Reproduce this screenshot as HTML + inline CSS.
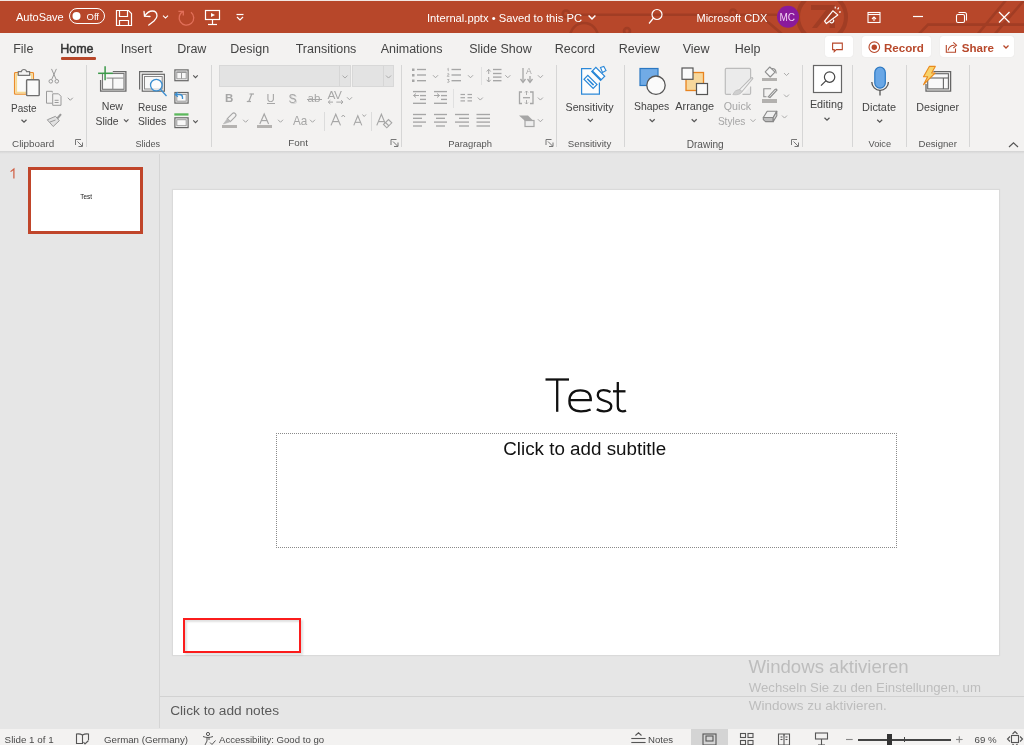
<!DOCTYPE html>
<html><head><meta charset="utf-8">
<style>
*{margin:0;padding:0;box-sizing:border-box}
html,body{width:1024px;height:745px;overflow:hidden;background:#e6e6e6;font-family:"Liberation Sans",sans-serif;position:relative}
.a{position:absolute;white-space:nowrap;line-height:1}
svg{position:absolute;left:0;top:0}
</style></head><body>
<div class="a" style="left:0px;top:0px;width:1024px;height:1px;background:#f2e6e2;"></div>
<div class="a" style="left:0px;top:1px;width:1024px;height:32px;background:#b7472a;"></div>
<div class="a" style="left:0px;top:33px;width:1024px;height:118px;background:#f3f2f1;"></div>
<div class="a" style="left:61px;top:57px;width:35px;height:3px;background:#b7472a;border-radius:1px"></div>
<div class="a" style="left:825px;top:36px;width:28px;height:21px;background:#fff;border-radius:3px;box-shadow:0 0 1px rgba(0,0,0,.12)"></div>
<div class="a" style="left:862px;top:36px;width:69px;height:21px;background:#fff;border-radius:3px;box-shadow:0 0 1px rgba(0,0,0,.12)"></div>
<div class="a" style="left:940px;top:36px;width:74px;height:21px;background:#fff;border-radius:3px;box-shadow:0 0 1px rgba(0,0,0,.12)"></div>
<div class="a" style="left:86px;top:65px;width:1px;height:82px;background:#d6d6d6;"></div>
<div class="a" style="left:211px;top:65px;width:1px;height:82px;background:#d6d6d6;"></div>
<div class="a" style="left:401px;top:65px;width:1px;height:82px;background:#d6d6d6;"></div>
<div class="a" style="left:556px;top:65px;width:1px;height:82px;background:#d6d6d6;"></div>
<div class="a" style="left:624px;top:65px;width:1px;height:82px;background:#d6d6d6;"></div>
<div class="a" style="left:802px;top:65px;width:1px;height:82px;background:#d6d6d6;"></div>
<div class="a" style="left:852px;top:65px;width:1px;height:82px;background:#d6d6d6;"></div>
<div class="a" style="left:906px;top:65px;width:1px;height:82px;background:#d6d6d6;"></div>
<div class="a" style="left:969px;top:65px;width:1px;height:82px;background:#d6d6d6;"></div>
<div class="a" style="left:219px;top:65px;width:132px;height:22px;background:#e3e3e3;border:1px solid #d8d8d8"></div>
<div class="a" style="left:352px;top:65px;width:42px;height:22px;background:#e3e3e3;border:1px solid #d8d8d8"></div>
<div class="a" style="left:338.5px;top:66px;width:1px;height:20px;background:#d6d6d6;"></div>
<div class="a" style="left:382.5px;top:66px;width:1px;height:20px;background:#d6d6d6;"></div>
<div class="a" style="left:267px;top:103px;width:8px;height:1px;background:#a6a6a6;"></div>
<div class="a" style="left:306.5px;top:99.3px;width:15px;height:1px;background:#a6a6a6;"></div>
<div class="a" style="left:222px;top:124.6px;width:14.6px;height:3.4px;background:#b5b3b1;"></div>
<div class="a" style="left:257px;top:125px;width:15px;height:3px;background:#b5b3b1;"></div>
<div class="a" style="left:324px;top:111.5px;width:1px;height:19.5px;background:#dcdcdc;"></div>
<div class="a" style="left:371px;top:111.5px;width:1px;height:19.5px;background:#dcdcdc;"></div>
<div class="a" style="left:481px;top:67px;width:1px;height:18px;background:#e0e0e0;"></div>
<div class="a" style="left:453px;top:89px;width:1px;height:19px;background:#e0e0e0;"></div>
<div class="a" style="left:762.2px;top:78px;width:15px;height:3.2px;background:#b3b1af;"></div>
<div class="a" style="left:762.2px;top:99px;width:15px;height:3.5px;background:#b3b1af;"></div>
<div class="a" style="left:0px;top:151px;width:1024px;height:3px;background:linear-gradient(#d3d3d3,#e6e6e6);"></div>
<div class="a" style="left:159px;top:154px;width:1px;height:574px;background:#d5d5d5;"></div>
<div class="a" style="left:28px;top:167px;width:115px;height:67px;background:#fff;border:3px solid #c0452a"></div>
<div class="a" style="left:173px;top:190px;width:826px;height:465px;background:#fff;box-shadow:0 0 1px 1px rgba(0,0,0,.05)"></div>
<div class="a" style="left:276px;top:433px;width:621px;height:115px;background:transparent;border:1px dotted #8a8a8a"></div>
<div class="a" style="left:183px;top:618px;width:118px;height:35px;background:transparent;border:2px solid #fb1c1c;box-shadow:inset 2px 2px 2px rgba(0,0,0,.12), 2px 2px 2px rgba(0,0,0,.12)"></div>
<div class="a" style="left:160px;top:696px;width:864px;height:1px;background:#d2d2d2;"></div>
<div class="a" style="left:0px;top:729px;width:1024px;height:16px;background:#f3f2f1;"></div>
<div class="a" style="left:691px;top:729px;width:37px;height:16px;background:#d4d4d4;"></div>
<div class="a" style="left:858px;top:739px;width:93px;height:1.5px;background:#444;"></div>
<div class="a" style="left:887px;top:733.5px;width:4.5px;height:11px;background:#333;"></div>
<div class="a" style="left:904px;top:736.7px;width:1.2px;height:5.5px;background:#444;"></div>
<svg width="1024" height="745" viewBox="0 0 1024 745">
<defs><clipPath id="tb"><rect x="0" y="1" width="1024" height="32"/></clipPath></defs>
<g clip-path="url(#tb)" fill="none" stroke="#a13d24" stroke-width="2.6"><line x1="569.5" y1="14.8" x2="777" y2="14.8"/><circle cx="566" cy="13.8" r="3.3"/><circle cx="733" cy="12.5" r="3"/><circle cx="584" cy="37" r="14"/><circle cx="627" cy="31" r="3"/><line x1="762" y1="17" x2="782" y2="34"/><circle cx="822" cy="17" r="24" stroke-width="4"/><polyline points="918,35 928,24.6 1026,24.6"/><line x1="977" y1="35" x2="1006" y2="0"/><line x1="994" y1="35" x2="1026" y2="-2"/></g>
<path d="M811 5 H835 V28 H829.5 V13 L817 28 H812 L826 10 H811 Z" fill="#a13d24"/>
<rect x="69.5" y="8.5" width="35" height="15" rx="7.5" fill="none" stroke="#fff" stroke-width="1"/>
<circle cx="76.5" cy="16" r="4" fill="#fff"/>
<g fill="none" stroke="#fff" stroke-width="1.2"><path d="M116.5 10.5 H128.5 L131.5 13.5 V25.5 H116.5 Z"/><path d="M119.5 10.5 V16.5 H127.5 V10.5"/><path d="M119.5 25.5 V20.5 H128.5 V25.5"/></g>
<g fill="none" stroke="#fff" stroke-width="1.3" stroke-linecap="round"><path d="M144.7 16 C147 12.5 150 11 152.3 11 C155 11 157 13 157 16 C157 18 155.5 19.5 154 21 L148.8 25"/><polyline points="144,11.3 144.5,16.2 150,16.5"/></g>
<polyline points="163.0,15.55 165.5,18.05 168.0,15.55" fill="none" stroke="#fff" stroke-width="1.1"/>
<g fill="none" stroke="#e2705a" stroke-width="1.3"><path d="M183.3 11.3 A7.3 7.3 0 1 0 191 12.2"/><polyline points="178.4,11.3 183.3,11.3 183.3,15.4"/></g>
<g fill="none" stroke="#fff" stroke-width="1.2"><rect x="205.5" y="10.5" width="14" height="9"/><line x1="212.5" y1="19.5" x2="212.5" y2="24.5"/><line x1="208" y1="24.5" x2="217" y2="24.5"/></g>
<path d="M211 13 L215 15 L211 17 Z" fill="#fff"/>
<g fill="none" stroke="#fff" stroke-width="1.2"><line x1="236.5" y1="14.5" x2="243.5" y2="14.5"/><polyline points="237,17 240,20 243,17"/></g>
<polyline points="588.6,15.6 592,19 595.4,15.6" fill="none" stroke="#fff" stroke-width="1.4"/>
<g fill="none" stroke="#fff" stroke-width="1.2"><circle cx="657" cy="14.5" r="5"/><line x1="653.5" y1="18" x2="649" y2="23.5"/></g>
<circle cx="788" cy="16.7" r="11" fill="#8a1a9b"/>
<g fill="none" stroke="#fff" stroke-width="1.2" stroke-linejoin="round"><path d="M824.6 21.2 L832.8 10.8 L837.8 14.9 L826.4 23.6 Z"/><path d="M829.8 21.8 A1.9 1.9 0 0 0 833.3 19.6"/><line x1="837.6" y1="9.3" x2="838.8" y2="7.5"/><line x1="839" y1="12.2" x2="840.8" y2="11.8"/><line x1="835.2" y1="8.5" x2="835.3" y2="6.6"/></g>
<g fill="none" stroke="#fff" stroke-width="1.1"><rect x="868" y="12.5" width="12" height="10"/><line x1="868" y1="14.5" x2="880" y2="14.5"/><polyline points="872,19 874,17 876,19"/><line x1="874" y1="17" x2="874" y2="21"/></g>
<line x1="913" y1="16.5" x2="923" y2="16.5" stroke="#fff" stroke-width="1.2"/>
<g fill="none" stroke="#fff" stroke-width="1.1"><rect x="956.5" y="14.5" width="8" height="8" rx="1.5"/><path d="M958.5 12.5 H964.5 A2 2 0 0 1 966.5 14.5 V20.5"/></g>
<g stroke="#fff" stroke-width="1.2"><line x1="999" y1="12" x2="1009.5" y2="22.5"/><line x1="1009.5" y1="12" x2="999" y2="22.5"/></g>
<g fill="none" stroke="#b7472a" stroke-width="1.1"><path d="M832.6 43.1 H842.3 V49.6 H836.3 L834.2 51.6 V49.6 H832.6 Z"/><circle cx="874.3" cy="47.2" r="5.3"/><path d="M946.3 45 V52.2 H955.5 V48.5"/><path d="M948.2 50.3 Q949 45.2 954.5 45.2"/><polyline points="953.3,42.3 956.5,45.2 953.3,48.1"/></g>
<circle cx="874.3" cy="47.2" r="2.7" fill="#b7472a"/>
<polyline points="1003.5,45.5 1006,48 1008.5,45.5" fill="none" stroke="#b7472a" stroke-width="1.3"/>
<g fill="none" stroke="#777" stroke-width="1"><polyline points="75.5,145 75.5,139.5 81,139.5"/><line x1="77.5" y1="141.5" x2="82" y2="146"/><polyline points="82.5,142.5 82.5,146.5 78.5,146.5"/></g>
<g fill="none" stroke="#777" stroke-width="1"><polyline points="391.0,145 391.0,139.5 396.5,139.5"/><line x1="393.0" y1="141.5" x2="397.5" y2="146"/><polyline points="398.0,142.5 398.0,146.5 394.0,146.5"/></g>
<g fill="none" stroke="#777" stroke-width="1"><polyline points="546.0,145 546.0,139.5 551.5,139.5"/><line x1="548.0" y1="141.5" x2="552.5" y2="146"/><polyline points="553.0,142.5 553.0,146.5 549.0,146.5"/></g>
<g fill="none" stroke="#777" stroke-width="1"><polyline points="791.5,145 791.5,139.5 797,139.5"/><line x1="793.5" y1="141.5" x2="798" y2="146"/><polyline points="798.5,142.5 798.5,146.5 794.5,146.5"/></g>
<polyline points="1009,147 1013.5,142.8 1018,147" fill="none" stroke="#555" stroke-width="1.2"/>
<g><rect x="14.6" y="72.6" width="18.8" height="21.6" rx="0.8" fill="#fafafa" stroke="#eb8c2a" stroke-width="1.3"/><rect x="16.3" y="74.3" width="15.4" height="18.2" fill="none" stroke="#f7d98f" stroke-width="1.6"/><path d="M18.3 75.3 V71.7 H21.3 A2.7 2.7 0 0 1 26.6 71.7 H29.6 V75.3 Z" fill="#f4f4f4" stroke="#777" stroke-width="1.2"/><rect x="26.6" y="79.7" width="12.6" height="15.9" rx="0.8" fill="#fafafa" stroke="#6f6f6f" stroke-width="1.4"/></g>
<polyline points="21.5,119.75 24,122.25 26.5,119.75" fill="none" stroke="#555" stroke-width="1.2"/>
<g fill="none" stroke="#9a9a9a" stroke-width="1"><line x1="51.5" y1="68.9" x2="56.2" y2="79.5"/><line x1="56.4" y1="68.9" x2="51.7" y2="79.5"/><circle cx="50.8" cy="81.3" r="1.8"/><circle cx="56.8" cy="81.3" r="1.8"/><path d="M52.3 92.5 V91.3 H46.5 V103.2 H52.3"/><path d="M52.7 93.8 H58.5 L61 96.3 V105.3 H52.7 Z"/><line x1="54.6" y1="100.3" x2="58.6" y2="100.3"/><line x1="54.6" y1="102.5" x2="58.6" y2="102.5"/><path d="M47.3 119.8 L55.5 116.3 L59.3 120.7 L53.2 126.5 Z" fill="#e2e2e2"/><line x1="50" y1="122" x2="55.5" y2="120"/></g>
<line x1="57.3" y1="118.5" x2="61" y2="114.2" stroke="#9a9a9a" stroke-width="2"/>
<polyline points="67.8,97.75 70.3,100.25 72.8,97.75" fill="none" stroke="#999" stroke-width="1"/>
<g fill="none" stroke="#6a6a6a" stroke-width="1.3"><polyline points="112.8,71.6 125.9,71.6 125.9,91.2 100.6,91.2 100.6,80"/></g>
<rect x="102.5" y="73.5" width="21.5" height="15.8" fill="#f8f8f8" stroke="#777" stroke-width="1.1"/>
<g stroke="#8a8a8a" stroke-width="1.1"><line x1="106.5" y1="78.1" x2="123.5" y2="78.1"/><line x1="112.8" y1="78.1" x2="112.8" y2="89"/></g>
<g stroke="#3c9a4a" stroke-width="1.5"><line x1="98.1" y1="73.3" x2="112.8" y2="73.3"/><line x1="105.1" y1="66.3" x2="105.1" y2="80.3"/></g>
<polyline points="123.95,119.375 126.2,121.625 128.45,119.375" fill="none" stroke="#555" stroke-width="1.1"/>
<polyline points="139.6,89.4 139.6,71.6 162.7,71.6" fill="none" stroke="#6a6a6a" stroke-width="1.2"/>
<rect x="142.3" y="74.3" width="22.1" height="16.9" fill="#f8f8f8" stroke="#6a6a6a" stroke-width="1.2"/>
<rect x="144.5" y="76.5" width="17.7" height="12.5" fill="none" stroke="#888" stroke-width="1"/>
<circle cx="156.3" cy="85.1" r="5.8" fill="rgba(255,255,255,.6)" stroke="#3a8ed0" stroke-width="1.3"/>
<line x1="160.4" y1="89.3" x2="166.5" y2="96" stroke="#3a8ed0" stroke-width="1.3"/>
<rect x="174.9" y="69.89999999999999" width="13.200000000000001" height="10.8" fill="#f8f8f8" stroke="#666" stroke-width="1.2"/>
<rect x="176.8" y="71.8" width="9.4" height="7" fill="none" stroke="#999" stroke-width="1"/>
<g stroke="#999" stroke-width="1"><line x1="176.5" y1="72.5" x2="186.5" y2="72.5"/><line x1="181.5" y1="72.5" x2="181.5" y2="78.8"/></g>
<rect x="174.9" y="92.5" width="13.200000000000001" height="10.600000000000001" fill="#f8f8f8" stroke="#666" stroke-width="1.2"/>
<rect x="176.8" y="94.4" width="9.4" height="6.800000000000001" fill="none" stroke="#999" stroke-width="1"/>
<g fill="none" stroke="#3a8ed0" stroke-width="1.3"><path d="M175.5 94.5 H179.5 A3 3 0 0 1 182.5 97.5 V99"/><polyline points="177.8,92.2 175.3,94.5 177.8,96.8"/></g>
<rect x="174.9" y="117.8" width="13.200000000000001" height="9.8" fill="#f8f8f8" stroke="#666" stroke-width="1.2"/>
<rect x="176.8" y="119.7" width="9.4" height="6" fill="none" stroke="#999" stroke-width="1"/>
<rect x="174.3" y="113.3" width="14.2" height="2.3" fill="#5cb85c"/>
<polyline points="193.25,75.375 195.5,77.625 197.75,75.375" fill="none" stroke="#555" stroke-width="1.1"/>
<polyline points="193.25,120.375 195.5,122.625 197.75,120.375" fill="none" stroke="#555" stroke-width="1.1"/>
<polyline points="342.5,75.55 345,78.05 347.5,75.55" fill="none" stroke="#aaa" stroke-width="1"/>
<polyline points="386.0,75.55 388.5,78.05 391.0,75.55" fill="none" stroke="#aaa" stroke-width="1"/>
<g stroke="#a6a6a6" stroke-width="1.2"><line x1="251.8" y1="94" x2="248.8" y2="101.5"/><line x1="249.5" y1="94" x2="254" y2="94"/><line x1="246.8" y1="101.5" x2="251" y2="101.5"/></g>
<g fill="none" stroke="#a6a6a6" stroke-width="1"><line x1="328.3" y1="102.1" x2="333" y2="102.1"/><polyline points="330.3,100.2 328.3,102.1 330.3,104"/><line x1="336.3" y1="102.1" x2="343" y2="102.1"/><polyline points="341,100.2 343,102.1 341,104"/></g>
<polyline points="347.0,97.25 349.5,99.75 352.0,97.25" fill="none" stroke="#a6a6a6" stroke-width="1"/>
<path d="M232.3 113.7 A2.12 2.12 0 0 1 235.3 116.7 L230.3 121.7 L227.3 118.7 Z" fill="none" stroke="#a6a6a6" stroke-width="1.1" stroke-linejoin="round"/>
<path d="M227.3 118.7 L230.3 121.7 L223.4 124 Z" fill="#b9b9b9" stroke="#b9b9b9" stroke-width="0.6" stroke-linejoin="round"/>
<polyline points="243.1,119.75 245.6,122.25 248.1,119.75" fill="none" stroke="#a6a6a6" stroke-width="1"/>
<g fill="none" stroke="#a6a6a6" stroke-width="1.15"><polyline points="259.8,124 264.2,114 268.6,124" stroke-linejoin="miter"/><line x1="261.21" y1="120.58" x2="267.19" y2="120.58"/></g>
<polyline points="278.0,119.75 280.5,122.25 283.0,119.75" fill="none" stroke="#a6a6a6" stroke-width="1"/>
<polyline points="310.0,119.75 312.5,122.25 315.0,119.75" fill="none" stroke="#a6a6a6" stroke-width="1"/>
<g fill="none" stroke="#a6a6a6" stroke-width="1.15"><polyline points="331,125.4 335.75,114.2 340.5,125.4"/><line x1="332.52" y1="121.59" x2="338.98" y2="121.59"/></g>
<polyline points="341.5,117 343.2,115 345,117" fill="none" stroke="#a6a6a6" stroke-width="1"/>
<g fill="none" stroke="#a6a6a6" stroke-width="1.1"><polyline points="353.8,125.4 357.8,115.8 361.8,125.4"/><line x1="355.08" y1="122.33" x2="360.52" y2="122.33"/></g>
<polyline points="362.5,114.5 364.2,116.5 366,114.5" fill="none" stroke="#a6a6a6" stroke-width="1"/>
<g fill="none" stroke="#a6a6a6" stroke-width="1.15"><polyline points="376.8,125.4 381.4,114.2 386,125.4"/><line x1="378.27" y1="121.59" x2="384.53" y2="121.59"/></g>
<g fill="none" stroke="#a6a6a6" stroke-width="1.1"><path d="M383.5 124.5 L388.5 119.5 L391.8 122.8 L386.8 127.8 Z" fill="#f3f2f1"/><line x1="385.5" y1="122.5" x2="389" y2="126"/></g>
<g fill="#a6a6a6"><rect x="412" y="68.5" width="2.5" height="2.5"/><rect x="412" y="74" width="2.5" height="2.5"/><rect x="412" y="79.5" width="2.5" height="2.5"/></g>
<g stroke="#a6a6a6" stroke-width="1.35"><line x1="417" y1="69.5" x2="426" y2="69.5"/><line x1="417" y1="75" x2="426" y2="75"/><line x1="417" y1="80.7" x2="426" y2="80.7"/></g>
<polyline points="433.0,75.25 435.5,77.75 438.0,75.25" fill="none" stroke="#a6a6a6" stroke-width="1"/>
<g fill="none" stroke="#a6a6a6" stroke-width="0.8"><polyline points="447.3,69.2 448.3,68.3 448.3,71.2"/><path d="M447.2 74 Q448.2 73 449.2 74 L447.2 76.3 H449.4"/><path d="M447.2 79.5 H449.2 L448 80.6 Q449.6 80.8 449.2 82 Q448.5 82.8 447.2 82.2"/></g>
<g stroke="#a6a6a6" stroke-width="1.35"><line x1="451.5" y1="69.5" x2="461" y2="69.5"/><line x1="451.5" y1="75" x2="461" y2="75"/><line x1="451.5" y1="80.7" x2="461" y2="80.7"/></g>
<polyline points="468.0,75.25 470.5,77.75 473.0,75.25" fill="none" stroke="#a6a6a6" stroke-width="1"/>
<g fill="none" stroke="#a6a6a6" stroke-width="1"><line x1="488.7" y1="69.5" x2="488.7" y2="74"/><polyline points="486.7,71.5 488.7,69.3 490.7,71.5"/><line x1="488.7" y1="77" x2="488.7" y2="82"/><polyline points="486.7,79.8 488.7,82 490.7,79.8"/></g>
<g stroke="#a6a6a6" stroke-width="1.35"><line x1="493" y1="69.5" x2="501.5" y2="69.5"/><line x1="493" y1="73.5" x2="501.5" y2="73.5"/><line x1="493" y1="77.1" x2="501.5" y2="77.1"/><line x1="493" y1="80.7" x2="501.5" y2="80.7"/></g>
<polyline points="505.3,75.25 507.8,77.75 510.3,75.25" fill="none" stroke="#a6a6a6" stroke-width="1"/>
<g fill="none" stroke="#a6a6a6" stroke-width="1.3"><line x1="523" y1="68" x2="523" y2="82"/><polyline points="520.5,79 523,82.5 525.5,79"/><line x1="530" y1="76" x2="530" y2="82"/><polyline points="527.5,79 530,82.5 532.5,79"/></g>
<polyline points="537.9,75.25 540.4,77.75 542.9,75.25" fill="none" stroke="#a6a6a6" stroke-width="1"/>
<g fill="none" stroke="#a6a6a6" stroke-width="1"><polyline points="416,93.5 413.5,95.5 416,97.5"/><line x1="413.5" y1="95.5" x2="419" y2="95.5"/><polyline points="437,93.5 439.5,95.5 437,97.5"/><line x1="434" y1="95.5" x2="439.5" y2="95.5"/></g>
<g stroke="#a6a6a6" stroke-width="1.35"><line x1="413" y1="91.6" x2="426" y2="91.6"/><line x1="420" y1="95.6" x2="426" y2="95.6"/><line x1="420" y1="99.4" x2="426" y2="99.4"/><line x1="413" y1="103.3" x2="426" y2="103.3"/></g>
<g stroke="#a6a6a6" stroke-width="1.35"><line x1="434" y1="91.6" x2="447" y2="91.6"/><line x1="441" y1="95.6" x2="447" y2="95.6"/><line x1="441" y1="99.4" x2="447" y2="99.4"/><line x1="434" y1="103.3" x2="447" y2="103.3"/></g>
<g stroke="#a6a6a6" stroke-width="1.2"><line x1="460.5" y1="94.5" x2="465" y2="94.5"/><line x1="467.5" y1="94.5" x2="472" y2="94.5"/><line x1="460.5" y1="97.7" x2="465" y2="97.7"/><line x1="467.5" y1="97.7" x2="472" y2="97.7"/><line x1="460.5" y1="100.9" x2="465" y2="100.9"/><line x1="467.5" y1="100.9" x2="472" y2="100.9"/></g>
<polyline points="477.8,97.55 480.3,100.05 482.8,97.55" fill="none" stroke="#a6a6a6" stroke-width="1"/>
<g fill="none" stroke="#a6a6a6" stroke-width="1.3"><polyline points="522,92 519.5,92 519.5,103.5 522,103.5"/><polyline points="530,92 533,92 533,103.5 530,103.5"/><line x1="523" y1="97.7" x2="530" y2="97.7"/></g>
<g fill="none" stroke="#a6a6a6" stroke-width="0.9"><line x1="526.5" y1="91" x2="526.5" y2="95"/><polyline points="525,92.5 526.5,91 528,92.5"/><line x1="526.5" y1="100" x2="526.5" y2="104"/><polyline points="525,102.5 526.5,104 528,102.5"/></g>
<polyline points="537.9,97.55 540.4,100.05 542.9,97.55" fill="none" stroke="#a6a6a6" stroke-width="1"/>
<g fill="#a6a6a6"><path d="M519 115.5 H528 L533.5 121 H525 Z" /></g>
<rect x="525" y="120.5" width="9" height="6" fill="#eee" stroke="#a6a6a6" stroke-width="1.2"/>
<polyline points="537.9,119.25 540.4,121.75 542.9,119.25" fill="none" stroke="#a6a6a6" stroke-width="1"/>
<g stroke="#a6a6a6" stroke-width="1.35"><line x1="413" y1="114.5" x2="426" y2="114.5"/><line x1="413" y1="118.3" x2="422" y2="118.3"/><line x1="413" y1="122.1" x2="426" y2="122.1"/><line x1="413" y1="126" x2="422" y2="126"/></g>
<g stroke="#a6a6a6" stroke-width="1.35"><line x1="434" y1="114.5" x2="447" y2="114.5"/><line x1="436" y1="118.3" x2="445" y2="118.3"/><line x1="434" y1="122.1" x2="447" y2="122.1"/><line x1="436" y1="126" x2="445" y2="126"/></g>
<g stroke="#a6a6a6" stroke-width="1.35"><line x1="455" y1="114.5" x2="469" y2="114.5"/><line x1="459" y1="118.3" x2="469" y2="118.3"/><line x1="455" y1="122.1" x2="469" y2="122.1"/><line x1="459" y1="126" x2="469" y2="126"/></g>
<g stroke="#a6a6a6" stroke-width="1.35"><line x1="476.5" y1="114.5" x2="490" y2="114.5"/><line x1="476.5" y1="118.3" x2="490" y2="118.3"/><line x1="476.5" y1="122.1" x2="490" y2="122.1"/><line x1="476.5" y1="126" x2="490" y2="126"/></g>
<rect x="581.6" y="68.6" width="17.8" height="25.6" fill="#fcfcfc" stroke="none"/>
<g fill="none" stroke="#2b88d8" stroke-width="1.2"><path d="M591.5 68.6 H581.6 V94.2 H599.4 V82.5"/></g>
<g transform="rotate(45 590.5 81.9)"><rect x="584" y="79.2" width="13" height="5.4" fill="#fff" stroke="#2b88d8" stroke-width="1.2"/><rect x="586" y="81.2" width="9" height="1.6" fill="#2b88d8"/></g>
<g transform="rotate(45 598.2 73.9)"><rect x="592" y="71" width="12.5" height="5.8" fill="#fff" stroke="#2b88d8" stroke-width="1.2"/><rect x="592" y="75.2" width="12.5" height="1.8" fill="#2b88d8"/></g>
<path d="M600.5 67.5 L603.8 66.5 L606 70.5 L602.5 72.5 Z" fill="#fff" stroke="#2b88d8" stroke-width="1.1"/>
<polyline points="587.9,118.95 590.4,121.45 592.9,118.95" fill="none" stroke="#555" stroke-width="1.1"/>
<rect x="640" y="68.5" width="18" height="17" fill="#71abe6" stroke="#2b78c2" stroke-width="1.2"/>
<circle cx="656" cy="85.2" r="9.2" fill="#fafafa" stroke="#555" stroke-width="1.3"/>
<polyline points="649.7,119.25 652.2,121.75 654.7,119.25" fill="none" stroke="#555" stroke-width="1.2"/>
<rect x="686" y="72.5" width="17.5" height="18" fill="#f7d79b" stroke="#e8831f" stroke-width="1.3"/>
<rect x="682" y="68" width="11" height="11.3" fill="#fafafa" stroke="#555" stroke-width="1.2"/>
<rect x="696.5" y="83.5" width="11" height="11" fill="#fafafa" stroke="#555" stroke-width="1.2"/>
<polyline points="691.7,119.25 694.2,121.75 696.7,119.25" fill="none" stroke="#555" stroke-width="1.2"/>
<path d="M731 94.4 H726.5 Q725.3 94.4 725.3 93.2 V69.6 Q725.3 68.4 726.5 68.4 H749.4 Q750.6 68.4 750.6 69.6 V78 M750.6 86.5 V93.2 Q750.6 94.4 749.4 94.4 H742.5" fill="#ebebeb" stroke="#bcbcbc" stroke-width="1.2"/>
<path d="M739.4 89.6 L751 78 Q752.5 77 752.8 78.5 L741.8 91.8 Z" fill="#f3f3f3" stroke="#bcbcbc" stroke-width="1.1"/>
<path d="M732.8 94.6 Q735 89.5 740 89.6 L742 91.6 Q740 95.6 732.8 94.6 Z" fill="#cfcfcf" stroke="#bcbcbc" stroke-width="0.8"/>
<polyline points="750.5,119.25 753,121.75 755.5,119.25" fill="none" stroke="#aaa" stroke-width="1"/>
<g fill="none" stroke="#8f8f8f" stroke-width="1.1" stroke-linejoin="round"><path d="M765.2 71.8 L769.8 67 L775 72.2 L770.2 77 Z" fill="#f6f6f6"/><path d="M771.5 68.5 Q776 68 776.2 73.5"/></g>
<g fill="none" stroke="#8f8f8f" stroke-width="1.1"><polyline points="771.1,88.8 763.8,88.8 763.8,96.8 766.5,96.8"/><path d="M768.2 96.8 L775 89.5 Q776.5 88.5 777 90 L770 97.5 Z" fill="#f6f6f6"/></g>
<path d="M763.3 117.5 L767.2 111.3 H776.8 L773.2 117.5 Z" fill="#f0f0f0" stroke="#888" stroke-width="1.1" stroke-linejoin="round"/>
<path d="M763.3 117.5 H773.2 V121.6 H765.5 L763.3 119.6 Z" fill="#bdbdbd" stroke="#888" stroke-width="1.1" stroke-linejoin="round"/>
<path d="M773.2 117.5 L776.8 111.3 V115.8 L773.2 121.6 Z" fill="#d8d8d8" stroke="#888" stroke-width="1.1" stroke-linejoin="round"/>
<polyline points="784.0,73.05 786.5,75.55 789.0,73.05" fill="none" stroke="#aaa" stroke-width="1"/>
<polyline points="784.0,94.55 786.5,97.05 789.0,94.55" fill="none" stroke="#aaa" stroke-width="1"/>
<polyline points="782.0,115.55 784.5,118.05 787.0,115.55" fill="none" stroke="#aaa" stroke-width="1"/>
<rect x="813.5" y="65.5" width="28" height="27" fill="#fff" stroke="#666" stroke-width="1.2"/>
<g fill="none" stroke="#444" stroke-width="1.2"><circle cx="829.6" cy="77.1" r="5.2"/><line x1="825.8" y1="80.9" x2="821" y2="85.7"/></g>
<polyline points="824.5,117.75 827,120.25 829.5,117.75" fill="none" stroke="#555" stroke-width="1.2"/>
<rect x="874.8" y="67.2" width="10.5" height="21" rx="5.25" fill="#69a7e6" stroke="#2b78c2" stroke-width="1.2"/>
<g fill="none" stroke="#555" stroke-width="1.3"><path d="M871.8 82 A8.3 8.3 0 0 0 888.4 82"/><line x1="880" y1="90.3" x2="880" y2="95.5"/></g>
<polyline points="877.2,119.75 879.7,122.25 882.2,119.75" fill="none" stroke="#555" stroke-width="1.2"/>
<path d="M933.4 71.7 H950.6 V91.1 H926 V84" fill="none" stroke="#666" stroke-width="1.3"/>
<rect x="927.7" y="73.7" width="20.7" height="15.2" fill="#f9f9f9" stroke="#666" stroke-width="1.1"/>
<g stroke="#666" stroke-width="1.1"><line x1="928" y1="78" x2="948.4" y2="78"/><line x1="943.4" y1="78" x2="943.4" y2="88.9"/></g>
<path d="M929.3 66.4 H935.3 L931.6 73 H935.1 L923.6 84.6 L927.6 76.7 H923.5 Z" fill="#f7d36b" stroke="#ea8a1e" stroke-width="1.1" stroke-linejoin="round"/>
<polyline points="10.6,171.6 13.9,169 13.9,178.4" fill="none" stroke="#cf5b3f" stroke-width="1.2"/>
<g fill="none" stroke="#111" stroke-width="2.3"><line x1="545.5" y1="379.5" x2="569" y2="379.5"/><line x1="557.2" y1="379.5" x2="557.2" y2="411.8"/><path d="M569.6 400.2 H590.8 Q591 390.3 580.3 390.3 Q569.4 390.3 569.4 401 Q569.4 411.3 581 411.3 Q587 411.3 590.6 409.5"/><path d="M610.5 392 Q607.5 390.2 603.5 390.2 Q597.8 390.2 597.8 395.3 Q597.8 399 604.5 400.8 Q611.3 402.6 611.3 406 Q611.3 411.3 604 411.3 Q599.8 411.3 596.8 409.3"/><path d="M617.8 382 V406 Q617.8 411.3 622.8 411.3 Q624.8 411.3 626 410.6"/><line x1="613" y1="391.3" x2="625.5" y2="391.3"/></g>
<g fill="none" stroke="#555" stroke-width="1.1"><path d="M82.5 744 V735 Q80 733.5 76.5 734 V743.5 H82.5"/><path d="M82.5 735 Q85 733.5 88.5 734 V740"/><polyline points="83.5,742 85,744 88.5,740.5"/></g>
<g fill="none" stroke="#555" stroke-width="1"><circle cx="208" cy="734" r="1.6"/><path d="M203 736.5 Q205.5 737.5 208 737.5 Q210.5 737.5 213 736.5 M207 737.5 V741 L205 745 M209 737.5 V740"/><polyline points="210,742.5 212,744.5 215.5,740.5"/></g>
<g fill="none" stroke="#555" stroke-width="1.1"><line x1="631.3" y1="742.5" x2="645.6" y2="742.5"/><line x1="631.3" y1="738.5" x2="645.6" y2="738.5"/><polyline points="635.4,735.5 638.5,732.8 641.5,735.5"/></g>
<g fill="none" stroke="#555" stroke-width="1.1"><rect x="703" y="734" width="13" height="11"/><rect x="706" y="736" width="7" height="5"/><rect x="740.5" y="733.5" width="5" height="4"/><rect x="748" y="733.5" width="5" height="4"/><rect x="740.5" y="740.5" width="5" height="4"/><rect x="748" y="740.5" width="5" height="4"/><path d="M778.5 734 H783.5 L784 735 L784.5 734 H789.5 V745 H778.5 Z"/><line x1="784" y1="735" x2="784" y2="745"/><line x1="780.5" y1="737" x2="782.5" y2="737"/><line x1="780.5" y1="739.5" x2="782.5" y2="739.5"/><line x1="785.5" y1="737" x2="787.5" y2="737"/><line x1="785.5" y1="739.5" x2="787.5" y2="739.5"/><rect x="815.5" y="733" width="12" height="6"/><line x1="821.5" y1="739" x2="821.5" y2="745"/><line x1="818" y1="745" x2="825" y2="745"/></g>
<g fill="none" stroke="#888" stroke-width="1.1"><line x1="846" y1="739.5" x2="852.7" y2="739.5"/><line x1="956" y1="739.5" x2="962.6" y2="739.5"/><line x1="959.3" y1="736.2" x2="959.3" y2="742.8"/></g>
<g fill="none" stroke="#555" stroke-width="1.1"><rect x="1011.5" y="735.5" width="7" height="7"/><polyline points="1012.5,734 1015,731.5 1017.5,734"/><polyline points="1012.5,744 1015,746.5 1017.5,744"/><polyline points="1010,736.5 1007.5,739 1010,741.5"/><polyline points="1020,736.5 1022.5,739 1020,741.5"/></g>
</svg>
<div style="position:absolute;left:0;top:0;width:1024px;height:745px;will-change:transform">
<div class="a" style="left:16px;top:12.00px;font-size:11px;color:#fff;font-weight:400;">AutoSave</div>
<div class="a" style="left:86.5px;top:12.00px;font-size:9.5px;color:#fff;font-weight:400;">Off</div>
<div class="a" style="left:427px;top:13.00px;font-size:11.2px;color:#fff;font-weight:400;">Internal.pptx &#8226; Saved to this PC</div>
<div class="a" style="left:696.5px;top:13.00px;font-size:11px;color:#fff;font-weight:400;">Microsoft CDX</div>
<div class="a" style="left:779.5px;top:13.00px;font-size:10px;color:#f0d0f2;font-weight:400;">MC</div>
<div class="a" style="left:13.2px;top:43.00px;font-size:12.5px;color:#444;font-weight:400;">File</div>
<div class="a" style="left:60.2px;top:43.00px;font-size:12.5px;color:#333;font-weight:400;-webkit-text-stroke:0.45px #333">Home</div>
<div class="a" style="left:120.7px;top:43.00px;font-size:12.5px;color:#444;font-weight:400;">Insert</div>
<div class="a" style="left:177.2px;top:43.00px;font-size:12.5px;color:#444;font-weight:400;">Draw</div>
<div class="a" style="left:230.2px;top:43.00px;font-size:12.5px;color:#444;font-weight:400;">Design</div>
<div class="a" style="left:295.7px;top:43.00px;font-size:12.5px;color:#444;font-weight:400;">Transitions</div>
<div class="a" style="left:380.7px;top:43.00px;font-size:12.5px;color:#444;font-weight:400;">Animations</div>
<div class="a" style="left:469.2px;top:43.00px;font-size:12.5px;color:#444;font-weight:400;">Slide Show</div>
<div class="a" style="left:554.7px;top:43.00px;font-size:12.5px;color:#444;font-weight:400;">Record</div>
<div class="a" style="left:618.7px;top:43.00px;font-size:12.5px;color:#444;font-weight:400;">Review</div>
<div class="a" style="left:682.7px;top:43.00px;font-size:12.5px;color:#444;font-weight:400;">View</div>
<div class="a" style="left:734.7px;top:43.00px;font-size:12.5px;color:#444;font-weight:400;">Help</div>
<div class="a" style="left:884px;top:42.00px;font-size:11.6px;color:#b8492c;font-weight:700;">Record</div>
<div class="a" style="left:961.7px;top:42.00px;font-size:11.6px;color:#b8492c;font-weight:700;">Share</div>
<div class="a" style="left:12px;top:139.00px;font-size:9.9px;color:#555;font-weight:400;">Clipboard</div>
<div class="a" style="left:135.4px;top:140.00px;font-size:9.1px;color:#555;font-weight:400;">Slides</div>
<div class="a" style="left:288.3px;top:138.00px;font-size:9.8px;color:#555;font-weight:400;">Font</div>
<div class="a" style="left:448.2px;top:139.00px;font-size:9.4px;color:#555;font-weight:400;">Paragraph</div>
<div class="a" style="left:567.8px;top:139.00px;font-size:9.7px;color:#555;font-weight:400;">Sensitivity</div>
<div class="a" style="left:686.7px;top:140.00px;font-size:10.1px;color:#555;font-weight:400;">Drawing</div>
<div class="a" style="left:868.6px;top:140.00px;font-size:9.2px;color:#555;font-weight:400;">Voice</div>
<div class="a" style="left:918.5px;top:139.00px;font-size:9.6px;color:#555;font-weight:400;">Designer</div>
<div class="a" style="left:11px;top:104.00px;font-size:10px;color:#444;font-weight:400;">Paste</div>
<div class="a" style="left:101.8px;top:101.00px;font-size:10.6px;color:#444;font-weight:400;">New</div>
<div class="a" style="left:95.5px;top:117.00px;font-size:10.4px;color:#444;font-weight:400;">Slide</div>
<div class="a" style="left:138px;top:103.00px;font-size:10.1px;color:#444;font-weight:400;">Reuse</div>
<div class="a" style="left:138px;top:117.00px;font-size:10.3px;color:#444;font-weight:400;">Slides</div>
<div class="a" style="left:225px;top:93.00px;font-size:11.5px;color:#a6a6a6;font-weight:700;">B</div>
<div class="a" style="left:266.5px;top:93.00px;font-size:11.5px;color:#a6a6a6;font-weight:400;">U</div>
<div class="a" style="left:288.5px;top:93.00px;font-size:12px;color:#a6a6a6;font-weight:400;text-shadow:1px 1px 0 #d6d6d6">S</div>
<div class="a" style="left:307.5px;top:93.00px;font-size:11.5px;color:#a6a6a6;font-weight:400;">ab</div>
<div class="a" style="left:327.5px;top:90.00px;font-size:11.8px;color:#a6a6a6;font-weight:400;letter-spacing:-0.5px">AV</div>
<div class="a" style="left:292.5px;top:114.00px;font-size:13px;color:#a6a6a6;font-weight:400;transform:scaleX(0.9);transform-origin:0 0">Aa</div>
<div class="a" style="left:526px;top:67.00px;font-size:8.5px;color:#a6a6a6;font-weight:400;">A</div>
<div class="a" style="left:565.5px;top:102.00px;font-size:10.7px;color:#444;font-weight:400;">Sensitivity</div>
<div class="a" style="left:634px;top:102.00px;font-size:10.4px;color:#444;font-weight:400;">Shapes</div>
<div class="a" style="left:675.3px;top:101.00px;font-size:10.9px;color:#444;font-weight:400;">Arrange</div>
<div class="a" style="left:723.8px;top:101.00px;font-size:10.7px;color:#a6a6a6;font-weight:400;">Quick</div>
<div class="a" style="left:717.9px;top:117.00px;font-size:10.1px;color:#a6a6a6;font-weight:400;">Styles</div>
<div class="a" style="left:809.9px;top:99.00px;font-size:10.8px;color:#444;font-weight:400;">Editing</div>
<div class="a" style="left:862.1px;top:102.00px;font-size:10.9px;color:#444;font-weight:400;">Dictate</div>
<div class="a" style="left:916.3px;top:102.00px;font-size:10.7px;color:#444;font-weight:400;">Designer</div>
<div class="a" style="left:80.3px;top:194.00px;font-size:6.4px;color:#222;font-weight:400;">Test</div>
<div class="a" style="left:503.3px;top:440.00px;font-size:18.8px;color:#111;font-weight:400;">Click to add subtitle</div>
<div class="a" style="left:748.5px;top:658.00px;font-size:18.6px;color:#bdbdbd;font-weight:400;">Windows aktivieren</div>
<div class="a" style="left:748.8px;top:681.00px;font-size:13.2px;color:#bdbdbd;font-weight:400;">Wechseln Sie zu den Einstellungen, um</div>
<div class="a" style="left:748.8px;top:699.00px;font-size:13.5px;color:#bdbdbd;font-weight:400;">Windows zu aktivieren.</div>
<div class="a" style="left:170.2px;top:704.00px;font-size:13.7px;color:#5a5a5a;font-weight:400;">Click to add notes</div>
<div class="a" style="left:4.6px;top:735.00px;font-size:9.8px;color:#4a4a4a;font-weight:400;">Slide 1 of 1</div>
<div class="a" style="left:104px;top:735.00px;font-size:9.7px;color:#4a4a4a;font-weight:400;">German (Germany)</div>
<div class="a" style="left:219px;top:735.00px;font-size:9.6px;color:#4a4a4a;font-weight:400;">Accessibility: Good to go</div>
<div class="a" style="left:648px;top:735.00px;font-size:9.6px;color:#4a4a4a;font-weight:400;">Notes</div>
<div class="a" style="left:974.5px;top:735.00px;font-size:9.7px;color:#4a4a4a;font-weight:400;">69 %</div>
</div>
</body></html>
